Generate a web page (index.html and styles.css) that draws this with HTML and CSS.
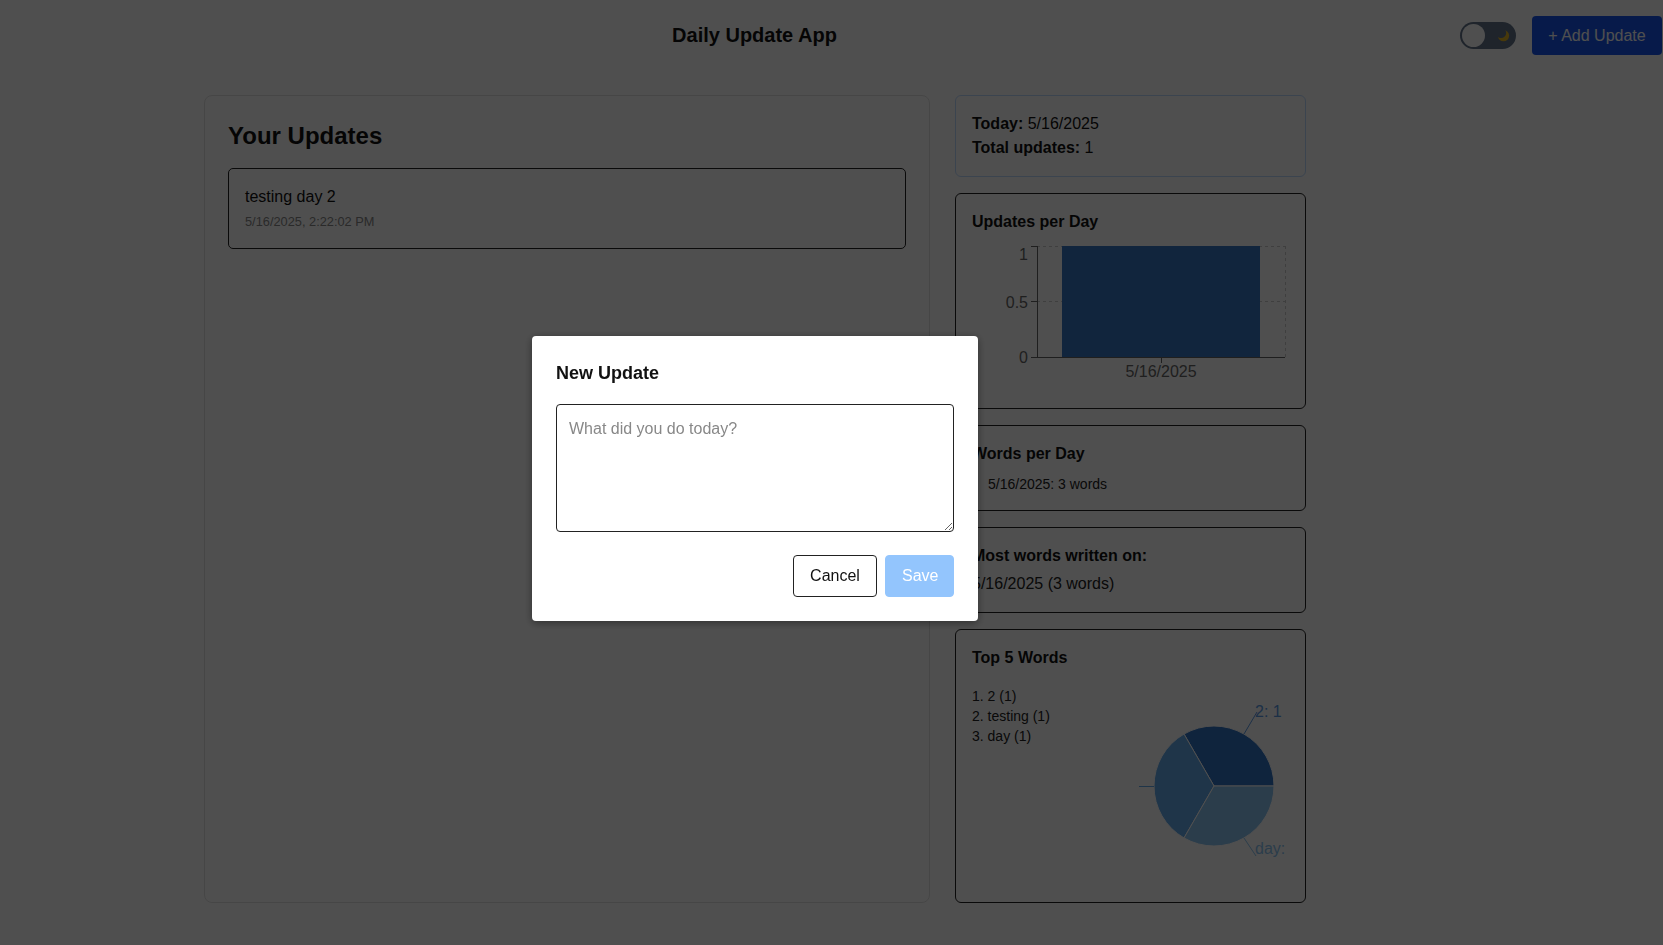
FILE: index.html
```html
<!DOCTYPE html>
<html lang="en">
<head>
<meta charset="utf-8">
<title>Daily Update App</title>
<link rel="stylesheet" href="styles.css">
</head>
<body>
<header class="header">
  <h1 class="title">Daily Update App</h1>
  <div class="controls">
    <div class="toggle">
      <span class="knob"></span>
      <svg class="moon" width="13" height="13" viewBox="0 0 12 12"><circle cx="6" cy="6.2" r="5.2" fill="#e9b824"/><circle cx="3.7" cy="3.6" r="4.8" fill="#64748b"/></svg>
    </div>
    <button class="add-btn">+ Add Update</button>
  </div>
</header>

<main class="main">
  <section class="card updates">
    <h2 class="updates-title">Your Updates</h2>
    <div class="update-item">
      <p class="update-text">testing day 2</p>
      <p class="update-time">5/16/2025, 2:22:02 PM</p>
    </div>
  </section>

  <aside class="side">
    <div class="stats">
      <p><strong>Today:</strong> 5/16/2025</p>
      <p><strong>Total updates:</strong> 1</p>
    </div>

    <div class="panel">
      <h3 class="panel-title">Updates per Day</h3>
      <svg class="bar-chart" width="317" height="158" viewBox="0 0 317 158">
        <g stroke="#ccc" stroke-dasharray="3 3" fill="none">
          <line x1="65" y1="12.5" x2="313" y2="12.5"/>
          <line x1="65" y1="67.5" x2="313" y2="67.5"/>
          <line x1="313.5" y1="12" x2="313.5" y2="123"/>
        </g>
        <rect x="90" y="12" width="198" height="111" fill="#3878c6"/>
        <g stroke="#666" fill="none">
          <line x1="65.5" y1="12" x2="65.5" y2="123"/>
          <line x1="59" y1="12.5" x2="65" y2="12.5"/>
          <line x1="59" y1="67.5" x2="65" y2="67.5"/>
          <line x1="59" y1="123.5" x2="65" y2="123.5"/>
          <line x1="65" y1="123.5" x2="313" y2="123.5"/>
          <line x1="189.5" y1="123" x2="189.5" y2="129"/>
        </g>
        <g class="tick" fill="#666" font-size="16">
          <text x="56" y="26" text-anchor="end">1</text>
          <text x="56" y="73.5" text-anchor="end">0.5</text>
          <text x="56" y="129" text-anchor="end">0</text>
          <text x="189" y="143" text-anchor="middle">5/16/2025</text>
        </g>
      </svg>
    </div>

    <div class="panel words">
      <h3 class="panel-title">Words per Day</h3>
      <ul class="words-list">
        <li>5/16/2025: 3 words</li>
      </ul>
    </div>

    <div class="panel">
      <h3 class="panel-title">Most words written on:</h3>
      <p class="most">5/16/2025 (3 words)</p>
    </div>

    <div class="panel top5">
      <h3 class="panel-title">Top 5 Words</h3>
      <div class="top5-row">
        <ol class="top-list">
          <li>1. 2 (1)</li>
          <li>2. testing (1)</li>
          <li>3. day (1)</li>
        </ol>
        <svg class="pie" width="150" height="200" viewBox="0 0 150 200">
          <path d="M75,100 L135,100 A60,60 0 0 0 45,48.04 Z" fill="#3174c6" stroke="#fff"/>
          <path d="M75,100 L45,48.04 A60,60 0 0 0 45,151.96 Z" fill="#64abeb" stroke="#fff"/>
          <path d="M75,100 L45,151.96 A60,60 0 0 0 135,100 Z" fill="#8cc4f2" stroke="#fff"/>
          <line x1="105" y1="48" x2="118" y2="26" stroke="#5b9be6"/>
          <line x1="15" y1="100.5" x2="-10" y2="100.5" stroke="#64abeb"/>
          <line x1="105" y1="152" x2="117" y2="170" stroke="#8cc4f2"/>
          <text x="116" y="31" fill="#5b9be6" font-size="16">2: 1</text>
          <text x="-12" y="105" fill="#64abeb" font-size="16" text-anchor="end">testing: 1</text>
          <text x="116" y="168" fill="#8cc4f2" font-size="16">day: 1</text>
        </svg>
      </div>
    </div>
  </aside>
</main>

<div class="overlay">
  <div class="modal">
    <h3 class="modal-title">New Update</h3>
    <textarea class="modal-input" placeholder="What did you do today?"></textarea>
    <div class="modal-actions">
      <button class="btn-cancel">Cancel</button>
      <button class="btn-save">Save</button>
    </div>
  </div>
</div>
</body>
</html>
```

FILE: styles.css
```css
* { box-sizing: border-box; }

body {
  margin: 0;
  background: #ffffff;
  color: #111;
  font-family: "Liberation Sans", Arial, sans-serif;
  font-size: 16px;
  line-height: 1.5;
}

p, h1, h2, h3, ul, ol { margin: 0; padding: 0; }

.header {
  display: flex;
  align-items: center;
  height: 70px;
  padding: 0 1px 0 49px;
}

.title {
  flex: 1;
  text-align: center;
  font-size: 20px;
  font-weight: bold;
  color: #111;
}

.controls {
  display: flex;
  align-items: center;
  gap: 16px;
}

.toggle {
  position: relative;
  width: 56px;
  height: 27px;
  border-radius: 14px;
  background: #64748b;
  display: flex;
  align-items: center;
  justify-content: flex-end;
  padding-right: 6px;
}

.knob {
  position: absolute;
  left: 2px;
  top: 2px;
  width: 23px;
  height: 23px;
  border-radius: 50%;
  background: #fff;
}

.moon { display: block; }

.add-btn {
  background: #1856ee;
  color: #fff;
  border: none;
  border-radius: 4px;
  font-family: inherit;
  font-size: 16px;
  line-height: 19px;
  padding: 10px 16px;
  width: 130px;
}

.main {
  display: grid;
  grid-template-columns: 726px 351px;
  gap: 25px;
  padding-left: 204px;
  margin-top: 25px;
}

.card {
  border: 1px solid #e2e2e2;
  border-radius: 8px;
  background: #fff;
}

.updates {
  padding: 22px 23px;
}

.updates-title {
  font-size: 24px;
  font-weight: bold;
  margin-bottom: 14px;
}

.update-item {
  border: 1px solid #222;
  border-radius: 5px;
  padding: 16px 16px 17px;
}

.update-text { color: #111; }

.update-time {
  margin-top: 3px;
  font-size: 12.8px;
  color: #888;
}

.side {
  display: flex;
  flex-direction: column;
  gap: 16px;
}

.stats {
  border: 1px solid #bfdbfe;
  border-radius: 6px;
  padding: 16px;
  color: #111;
}

.panel {
  border: 1px solid #222;
  border-radius: 6px;
  padding: 16px;
}

.panel.words {
  padding-bottom: 15px;
}

.panel-title {
  font-size: 16px;
  font-weight: bold;
  color: #111;
}

.bar-chart { display: block; }

.tick { font-family: "Liberation Sans", Arial, sans-serif; }

.words-list {
  list-style: none;
  padding-left: 16px;
  margin-top: 9px;
  font-size: 14px;
  line-height: 1.4;
  color: #222;
}

.most {
  margin-top: 4px;
  color: #222;
}

.top5-row {
  display: flex;
  justify-content: space-between;
  align-items: flex-start;
  margin-top: 16px;
}

.top-list {
  list-style: none;
  font-size: 14px;
  line-height: 20px;
  color: #222;
}

.pie {
  display: block;
  font-family: "Liberation Sans", Arial, sans-serif;
}

.overlay {
  position: fixed;
  inset: 0;
  background: rgba(0, 0, 0, 0.69);
  display: flex;
  align-items: center;
  justify-content: center;
  padding: 12px 153px 0 0;
}

.modal {
  width: 446px;
  background: #fff;
  border-radius: 4px;
  padding: 24px;
  box-shadow: 0 2px 8px rgba(0, 0, 0, 0.4);
}

.modal-title {
  font-size: 18px;
  font-weight: bold;
  line-height: 27px;
  color: #111;
  margin-bottom: 17px;
}

.modal-input {
  display: block;
  width: 398px;
  height: 128px;
  border: 1px solid #222;
  border-radius: 4px;
  padding: 12px;
  font-family: inherit;
  font-size: 16px;
  line-height: 1.5;
  resize: vertical;
}

.modal-input::placeholder { color: #888; }

.modal-actions {
  display: flex;
  justify-content: flex-end;
  gap: 8px;
  margin-top: 23px;
}

.btn-cancel,
.btn-save {
  font-family: inherit;
  font-size: 16px;
  line-height: 18px;
  border-radius: 4px;
  padding: 11px 16px;
}

.btn-cancel {
  background: #fff;
  color: #111;
  border: 1px solid #222;
  width: 84px;
}

.btn-save {
  background: #93c5fd;
  color: #fff;
  border: 1px solid #93c5fd;
  width: 69px;
}
```
